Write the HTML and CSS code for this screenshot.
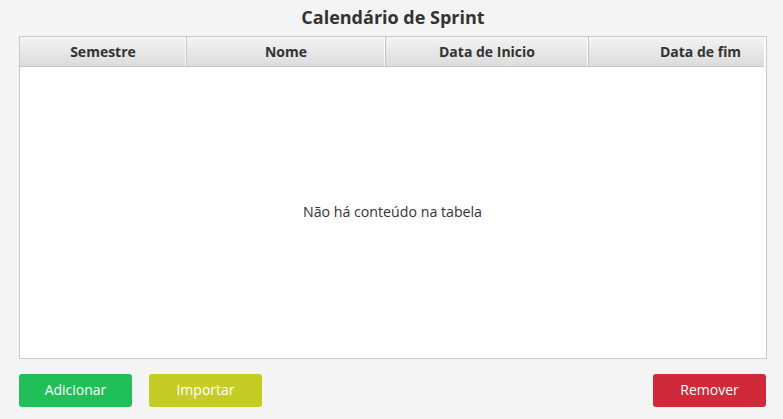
FILE: index.html
```html
<!DOCTYPE html>
<html lang="pt">
<head>
<meta charset="utf-8">
<title>Calendário de Sprint</title>
<link rel="stylesheet" href="styles.css">
</head>
<body>
<div class="page">
  <h1 class="title">Calendário de Sprint</h1>
  <div class="table">
    <div class="thead">
      <div class="th c1">Semestre</div>
      <div class="th c2">Nome</div>
      <div class="th c3">Data de Inicio</div>
      <div class="th c4">Data de fim</div>
    </div>
    <div class="tbody">
      <span class="empty">Não há conteúdo na tabela</span>
    </div>
  </div>
  <div class="actions">
    <button class="btn btn-add">Adicionar</button>
    <button class="btn btn-import">Importar</button>
    <button class="btn btn-remove">Remover</button>
  </div>
</div>
</body>
</html>
```
FILE: styles.css
```css
html, body {
  margin: 0;
  padding: 0;
  background: #f4f4f4;
}
body {
  font-family: "Open Sans", "Noto Sans", "Liberation Sans", sans-serif;
  color: #333;
  width: 783px;
  height: 419px;
  overflow: hidden;
}
.page {
  padding: 0 16px 0 19px;
  display: flex;
  flex-direction: column;
}
.title {
  margin: 0;
  height: 36px;
  line-height: 34px;
  font-size: 18px;
  font-weight: 700;
  text-align: center;
  color: #333;
}
.table {
  height: 321px;
  border: 1px solid #c9c9c9;
  background: #fff;
  display: flex;
  flex-direction: column;
}
.thead {
  display: flex;
  height: 29px;
  margin-right: 2px;
  background: linear-gradient(#f3f3f3, #dcdcdc);
  border-bottom: 1px solid #c8c8c8;
}
.th {
  font-size: 14px;
  font-weight: 700;
  color: #333;
  text-align: center;
  line-height: 29px;
  border-right: 1px solid #c6c6c6;
  box-shadow: inset -1px 0 0 #fafafa;
  box-sizing: border-box;
  white-space: nowrap;
  overflow: hidden;
}
.c1 { width: 167px; }
.c2 { width: 199px; }
.c3 { width: 203px; }
.c4 { flex: 1; border-right: none; box-shadow: none; padding-left: 48px; }
.tbody {
  flex: 1;
  display: flex;
  align-items: center;
  justify-content: center;
}
.empty {
  font-size: 14.2px;
  color: #333;
  margin-left: -1px;
  margin-top: -2px;
}
.actions {
  display: flex;
  gap: 17px;
  margin-top: 15px;
}
.btn {
  width: 113px;
  height: 33px;
  border: none;
  border-radius: 3px;
  color: #fff;
  font-family: "Open Sans", "Noto Sans", "Liberation Sans", sans-serif;
  font-size: 14px;
  line-height: 31px;
  padding: 0 0 2px;
  margin: 0;
}
.btn-add { background: #21bf58; }
.btn-import { background: #c4cd25; }
.btn-remove { background: #d02a3a; margin-left: auto; margin-right: 1px; }
```
